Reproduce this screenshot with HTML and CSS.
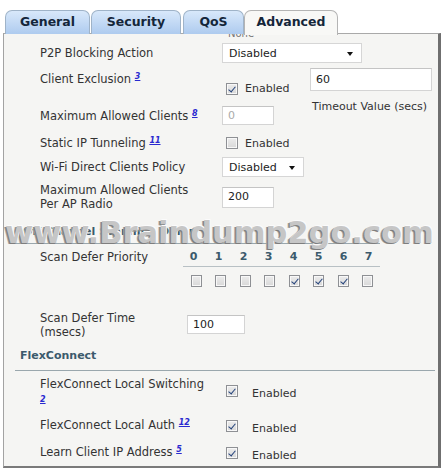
FILE: index.html
```html
<!doctype html>
<html lang="en">
  <head>
    <meta charset="UTF-8" />
    <title>WLAN Advanced</title>
    <link rel="stylesheet" href="styles.css">
  </head>
  <body>
    <div class="tabs">
      <div class="tab tab-general">General</div>
      <div class="tab tab-security">Security</div>
      <div class="tab tab-qos">QoS</div>
      <div class="tab tab-advanced active">Advanced</div>
    </div>

    <div class="panel">
      <div class="clip"><span>None</span></div>

      <div class="row row-p2p">
        <div class="label">P2P Blocking Action</div>
        <div class="select select-wide">Disabled<span class="arrow"></span></div>
      </div>

      <div class="row row-excl">
        <div class="label label-top">Client Exclusion <sup class="ref">3</sup></div>
        <div class="check-group excl-check">
          <span class="cb checked"></span><span class="cb-text">Enabled</span>
        </div>
        <div class="timeout">
          <div class="input input-timeout">60</div>
          <div class="hint">Timeout Value (secs)</div>
        </div>
      </div>

      <div class="row row-max">
        <div class="label">Maximum Allowed Clients <sup class="ref">8</sup></div>
        <div class="input input-small disabled">0</div>
      </div>

      <div class="row row-static">
        <div class="label">Static IP Tunneling <sup class="ref">11</sup></div>
        <div class="check-group">
          <span class="cb"></span><span class="cb-text">Enabled</span>
        </div>
      </div>

      <div class="row row-wifi">
        <div class="label">Wi-Fi Direct Clients Policy</div>
        <div class="select select-narrow">Disabled<span class="arrow"></span></div>
      </div>

      <div class="row row-perap">
        <div class="label label-top">Maximum Allowed Clients<br>Per AP Radio</div>
        <div class="input input-small input-perap">200</div>
      </div>

      <div class="section section-scan">Off Channel Scanning Defer</div>

      <div class="row row-priority">
        <div class="label label-scan label-top">Scan Defer Priority</div>
        <div class="priority">
          <div class="digits">
            <span>0</span><span>1</span><span>2</span><span>3</span>
            <span>4</span><span>5</span><span>6</span><span>7</span>
          </div>
          <div class="boxes">
            <span><i class="cb"></i></span>
            <span><i class="cb"></i></span>
            <span><i class="cb"></i></span>
            <span><i class="cb"></i></span>
            <span><i class="cb checked"></i></span>
            <span><i class="cb checked"></i></span>
            <span><i class="cb checked"></i></span>
            <span><i class="cb"></i></span>
          </div>
        </div>
      </div>

      <div class="row row-defertime">
        <div class="label label-time label-top">Scan Defer Time<br>(msecs)</div>
        <div class="input input-defer">100</div>
      </div>

      <div class="section section-flex">FlexConnect</div>

      <div class="row row-fcls">
        <div class="label label-top">FlexConnect Local Switching<br><sup class="ref ref-line">2</sup></div>
        <div class="check-group flex-check fcls-check">
          <span class="cb checked"></span><span class="cb-text">Enabled</span>
        </div>
      </div>

      <div class="row row-fcla">
        <div class="label label-top">FlexConnect Local Auth <sup class="ref">12</sup></div>
        <div class="check-group flex-check">
          <span class="cb checked"></span><span class="cb-text">Enabled</span>
        </div>
      </div>

      <div class="row row-learn">
        <div class="label label-top">Learn Client IP Address <sup class="ref">5</sup></div>
        <div class="check-group flex-check">
          <span class="cb checked"></span><span class="cb-text">Enabled</span>
        </div>
      </div>

      <div class="watermark">www.Braindump2go.com</div>
    </div>
  </body>
</html>
```

FILE: styles.css
```css
* {
  margin: 0;
  padding: 0;
  box-sizing: border-box;
}

body {
  font-family: "DejaVu Sans", Verdana, sans-serif;
  font-size: 11px;
  color: #333;
  background: #fff;
  width: 444px;
  height: 471px;
  overflow: hidden;
}

/* tabs */
.tabs {
  display: flex;
  padding: 10px 0 0 5px;
  height: 34px;
  position: relative;
  z-index: 2;
}

.tab {
  height: 24px;
  line-height: 22px;
  text-align: center;
  font-size: 12.5px;
  font-weight: bold;
  color: #14263a;
  background: linear-gradient(#d8e8fa, #aecbef);
  border: 1px solid #9fb3c8;
  border-bottom: none;
  border-radius: 7px 7px 0 0;
  margin-right: 1px;
}

.tab-general { width: 85px; }
.tab-security { width: 90px; }
.tab-qos { width: 61px; margin-left: 1px; margin-right: 0; }
.tab-advanced { width: 94px; }

.tab.active {
  background: #f8f8f6;
  border-color: #b4b4b4;
  height: 25px;
}

/* panel */
.panel {
  position: relative;
  margin: -1px 0 0 3px;
  width: 438px;
  height: 435px;
  background: #f5f5f3;
  border-top: 1px solid #a9a9a9;
  border-left: 1px solid #a3a3a3;
  border-right: 3px solid #6f6f6f;
  border-bottom: 2px solid #7a7a7a;
}

.clip {
  height: 3px;
  overflow: hidden;
  padding-left: 224px;
  font-size: 10px;
  line-height: 3px;
  color: #777;
}

.clip span {
  display: block;
  margin-top: -5px;
  line-height: 10px;
}

.row {
  display: flex;
  align-items: center;
  padding-left: 36px;
}

.label {
  width: 182px;
  flex: none;
  font-size: 11.5px;
  line-height: 14px;
}

.label-top {
  align-self: flex-start;
}

.ref {
  font-size: 8px;
  font-weight: bold;
  font-style: italic;
  color: #2a2ad0;
  text-decoration: underline;
  vertical-align: 4px;
  line-height: 0;
}

.ref-line {
  vertical-align: 0;
}

/* controls */
.select {
  position: relative;
  height: 20px;
  line-height: 19px;
  padding-left: 6px;
  background: #fff;
  border: 1px solid #d6d6d6;
  color: #222;
}

.select-wide { width: 140px; }
.select-narrow { width: 82px; }

.arrow {
  position: absolute;
  right: 8px;
  top: 8px;
  border-left: 3.5px solid transparent;
  border-right: 3.5px solid transparent;
  border-top: 4px solid #111;
}

.input {
  height: 20px;
  line-height: 18px;
  padding-left: 5px;
  background: #fff;
  border: 1px solid #d4d4d4;
  border-top-color: #c4c4c4;
  color: #222;
}

.input-small { width: 52px; }
.input.disabled { color: #aaa; height: 19px; }

.cb {
  display: inline-block;
  width: 12px;
  height: 12px;
  border: 1px solid #8e9094;
  background: linear-gradient(#ececec, #d8d8d8);
  box-shadow: inset 0 0 0 1px #f8f8f8;
  position: relative;
  flex: none;
}

.cb.checked::after {
  content: "";
  position: absolute;
  left: 3px;
  top: 1px;
  width: 3px;
  height: 6px;
  border-right: 1.5px solid #23427a;
  border-bottom: 1.5px solid #23427a;
  transform: rotate(40deg);
}

.check-group {
  display: flex;
  align-items: center;
  padding-left: 4px;
}

.cb-text {
  margin-left: 7px;
}

/* client exclusion */
.row-p2p { margin-top: 6px; height: 20px; }

.row-excl {
  margin-top: 5px;
  height: 38px;
  align-items: flex-start;
}

.row-excl .label { padding-top: 4px; }

.excl-check { margin-top: 14px; width: 88px; }

.timeout { width: 122px; }

.input-timeout {
  height: 23px;
  line-height: 21px;
}

.hint {
  margin-top: 9px;
  padding-left: 2px;
  line-height: 14px;
  white-space: nowrap;
}

.row-max { height: 19px; }
.row-static { margin-top: 8px; height: 20px; }
.row-wifi { margin-top: 4px; height: 20px; }

.row-perap {
  margin-top: 6px;
  height: 28px;
  align-items: flex-start;
}

.input-perap { margin-top: 4px; height: 21px; }

/* sections */
.section {
  margin-left: 11px;
  padding: 0 0 4px 8px;
  line-height: 14px;
  font-weight: bold;
  color: #3b5a6c;
  border-bottom: 1px solid #9aa7ad;
}

.section-scan { margin-top: 14px; width: 365px; }
.section-flex { margin-top: 10px; width: 420px; padding-left: 5px; padding-bottom: 7px; }

/* scan defer priority */
.row-priority {
  margin-top: 6px;
  align-items: flex-start;
}

.label-scan { width: 141px; }

.priority { width: 200px; }

.digits,
.boxes {
  display: flex;
}

.digits span {
  width: 25px;
  text-align: center;
  line-height: 14px;
  font-weight: bold;
  color: #3b5a6c;
}

.boxes {
  margin: 2px 0 0 2px;
  padding: 8px 0 0 1px;
  border-top: 1px solid #b8c0c4;
  width: 197px;
}

.boxes span {
  width: 25px;
  display: flex;
  justify-content: center;
}

.boxes .cb {
  width: 11px;
  height: 12px;
}

.row-defertime {
  margin-top: 24px;
  align-items: flex-start;
}

.label-time { width: 147px; }

.input-defer {
  width: 58px;
  height: 19px;
  margin-top: 4px;
}

/* flexconnect */
.row-fcls { margin-top: 6px; height: 27px; align-items: flex-start; }
.row-fcla { margin-top: 14px; align-items: flex-start; }
.row-learn { margin-top: 10px; align-items: flex-start; }

.flex-check {
  align-items: flex-start;
  margin-top: 2px;
}

.fcls-check { margin-top: 8px; }

.flex-check .cb-text {
  margin-left: 14px;
  margin-top: 2px;
}

/* watermark overlay */
.watermark {
  position: absolute;
  left: 1px;
  top: 183px;
  font-family: "DejaVu Sans", Verdana, sans-serif;
  font-size: 30.5px;
  font-weight: bold;
  line-height: 32px;
  color: #c6c6c6;
  text-shadow: 1px -1px 0 #fbfbfb, -1px 1px 0 #7e7e7e, -2px 1px 0 #a4a4a4;
  white-space: nowrap;
}
```
